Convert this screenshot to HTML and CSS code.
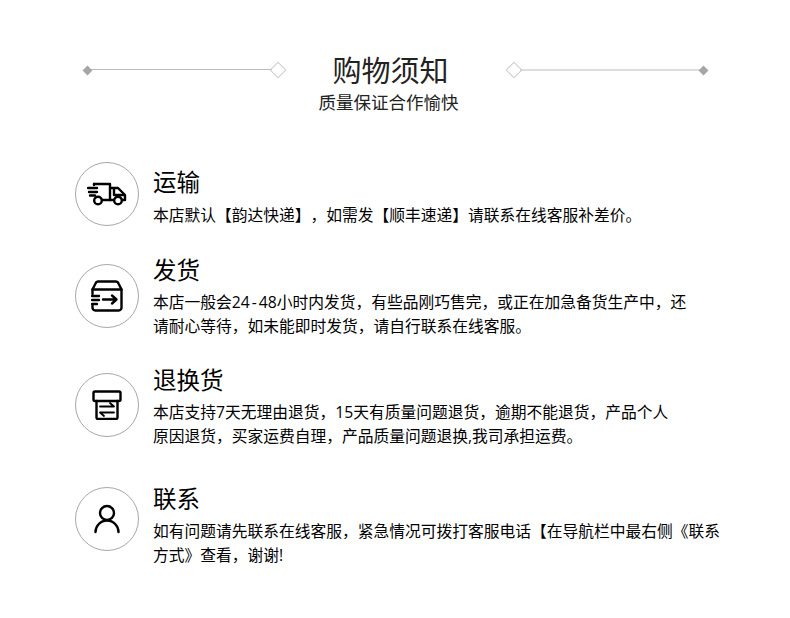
FILE: index.html
```html
<!DOCTYPE html>
<html lang="zh-CN">
<head>
<meta charset="utf-8">
<title>购物须知</title>
<link rel="stylesheet" href="styles.css">
</head>
<body>
<main class="page">
  <header class="head">
    <div class="rule rule-left"><span class="dot"></span><span class="line"></span><span class="hollow"></span></div>
    <div class="head-text">
      <h1>购物须知</h1>
      <p>质量保证合作愉快</p>
    </div>
    <div class="rule rule-right"><span class="hollow"></span><span class="line"></span><span class="dot"></span></div>
  </header>
  <section class="items">
    <article class="item item-ship">
      <div class="badge">
        <svg viewBox="0 0 40 26" width="40" height="26" fill="none" stroke="#000" stroke-width="2.400" stroke-linecap="round" stroke-linejoin="round">
          <path d="M7 3h16v16H15"/><path d="M23 7h8l7 7v5h-3"/><path d="M23 19h4"/><path d="M27 8v6h10"/>
          <circle cx="11" cy="19.500" r="3.800"/><circle cx="31" cy="19.500" r="3.800"/>
          <path d="M1 7h9M2 11h8M3 14.500h5M7 3v1"/>
        </svg>
      </div>
      <div class="copy">
        <h2>运输</h2>
        <p>本店默认【韵达快递】，如需发【顺丰速递】请联系在线客服补差价。</p>
      </div>
    </article>
    <article class="item item-send">
      <div class="badge">
        <svg viewBox="0 0 32 32" width="32" height="32" fill="none" stroke="#000" stroke-width="2.400" stroke-linecap="round" stroke-linejoin="round">
          <path d="M1.500 9.500l3-6a3 3 0 0 1 2.500-2h18a3 3 0 0 1 2.500 2l3 6"/>
          <path d="M1.500 14V9.500h29V27a3 3 0 0 1-3 3.500H4.500a3 3 0 0 1-3-3.500v-1.500"/>
          <path d="M1 16h7M1 20h7M1 24h5"/>
          <path d="M12 19.500h13M21 15.500l4.500 4-4.500 4"/>
        </svg>
      </div>
      <div class="copy">
        <h2>发货</h2>
        <p>本店一般会24<span class="dash">-</span>48小时内发货，有些品刚巧售完，或正在加急备货生产中，还<br>请耐心等待，如未能即时发货，请自行联系在线客服。</p>
      </div>
    </article>
    <article class="item item-return">
      <div class="badge">
        <svg viewBox="0 0 30 30" width="30" height="30" fill="none" stroke="#000" stroke-width="2.400" stroke-linecap="round" stroke-linejoin="round">
          <rect x="1.500" y="1.500" width="27" height="9.500" rx="1.500"/>
          <path d="M4.500 11v16.500a1.500 1.500 0 0 0 1.500 1.500h18a1.500 1.500 0 0 0 1.500-1.500V11"/>
          <path d="M8 16.500h14l-4-3.500M22 22.500H8l4 3.500" stroke-width="1.800"/>
        </svg>
      </div>
      <div class="copy">
        <h2>退换货</h2>
        <p>本店支持7天无理由退货，15天有质量问题退货，逾期不能退货，产品个人<br>原因退货，买家运费自理，产品质量问题退换,我司承担运费。</p>
      </div>
    </article>
    <article class="item item-contact">
      <div class="badge">
        <svg viewBox="0 0 28 30" width="28" height="30" fill="none" stroke="#000" stroke-width="2.400" stroke-linecap="round">
          <circle cx="14" cy="9" r="7"/>
          <path d="M2.500 28c0-6 5-11.500 11.500-11.500s11.500 5.500 11.500 11.500"/>
        </svg>
      </div>
      <div class="copy">
        <h2>联系</h2>
        <p>如有问题请先联系在线客服，紧急情况可拨打客服电话【在导航栏中最右侧《联系<br>方式》查看，谢谢!</p>
      </div>
    </article>
  </section>
</main>
</body>
</html>
```
FILE: styles.css
```css
* { box-sizing: border-box; margin: 0; padding: 0; }
html, body { background: #fff; }
body { width: 790px; height: 618px; overflow: hidden; font-family: "Open Sans", "Noto Sans CJK SC", sans-serif; color: #000; text-spacing-trim: space-all; }
.page { padding-top: 49px; }
.head { display: flex; align-items: flex-start; padding-left: 84px; padding-right: 83px; }
.head-text { width: 224px; flex: none; text-align: center; }
.head-text h1 { font-size: 29px; line-height: 39px; font-weight: 400; color: #222; padding-right: 10px; margin-top: 2px; }
.head-text p { font-size: 17.500px; line-height: 25px; color: #222; padding-right: 14px; }
.rule { flex: 1; display: flex; align-items: center; height: 14px; margin-top: 14px; }
.line { flex: 1; height: 1px; background: #bbb; }
.rule-left .line { margin-bottom: 1px; }
.rule-right .line { height: 2px; background: #ddd; }
.dot { width: 7px; height: 7px; background: #a6a6a6; transform: rotate(45deg); flex: none; }
.hollow { width: 12px; height: 12px; border: 1px solid #ccc; transform: rotate(45deg); flex: none; }
.items { padding-left: 75px; padding-top: 47px; }
.item { display: flex; gap: 14px; align-items: flex-start; }
.item-send { margin-top: 27px; }
.item-return { margin-top: 26px; }
.item-contact { margin-top: 35px; }
.badge { width: 64px; height: 64px; flex: none; border: 1px solid #a8a8a8; border-radius: 50%; display: flex; align-items: center; justify-content: center; }
.item-send .badge { margin-top: 10px; }
.item-return .badge { margin-top: 9px; }
.item-contact .badge { margin-top: 4px; }
.item-ship .copy { margin-top: 4px; }
.copy h2 { font-size: 23.500px; line-height: 32px; font-weight: 400; }
.copy p { font-size: 15.750px; line-height: 24px; white-space: nowrap; margin-top: 4px; }
.item-ship .copy p { margin-top: 5px; }
.dash { padding: 0 2px; }
```
